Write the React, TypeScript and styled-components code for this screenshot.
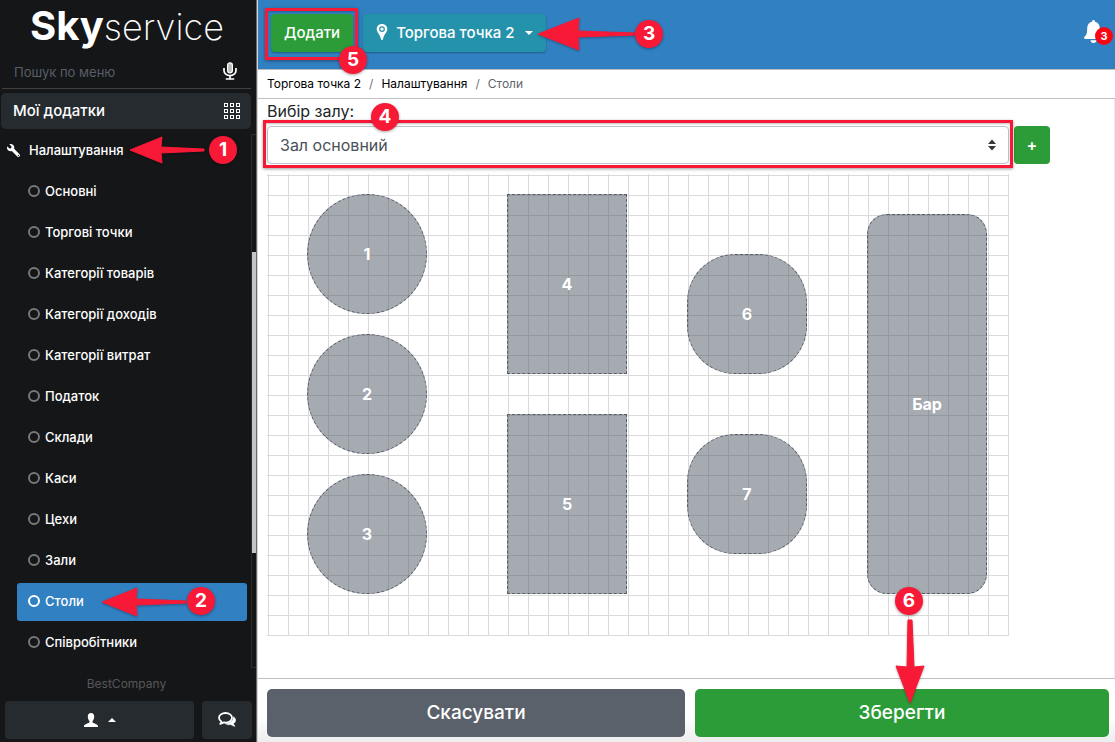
import React from "react";
import styled, { createGlobalStyle, css } from "styled-components";
import { FaWrench } from "react-icons/fa";

const RED = "#f71936";
const BLUE = "#3180c2";
const GREEN = "#2b9c37";

const GlobalStyle = createGlobalStyle`
  *, *::before, *::after { box-sizing: border-box; }
  body {
    margin: 0;
    background: #fff;
    color: #212529;
    font: 400 16px/24px Inter, "Noto Sans", sans-serif;
  }
  button, input, select { font: inherit; margin: 0; }
  button { cursor: pointer; border: 0; padding: 0; }
  ul, ol { list-style: none; margin: 0; padding: 0; }
  a { color: inherit; text-decoration: none; }
`;

const Page = styled.div`
  display: grid;
  grid-template-columns: 257px minmax(0, 1fr);
  min-height: 100vh;
`;

/* ---------- sidebar ---------- */

const Sidebar = styled.aside`
  position: relative;
  display: flex;
  flex-direction: column;
  background: #151618;
  border-right: 1px solid #6a6a6c;
  color: #fff;
`;

const Logo = styled.a`
  height: 55px;
  padding-left: 30px;
  font-size: 36px;
  line-height: 52px;
  font-weight: 200;
  white-space: nowrap;
  b {
    font-size: 40px;
    font-weight: 700;
  }
`;

const Search = styled.div`
  display: flex;
  align-items: center;
  justify-content: space-between;
  height: 34px;
  margin: 0 5px 0 2px;
  padding: 0 14px 2px 12px;
  border-bottom: 1px solid #3f4041;
`;

const SearchInput = styled.input`
  flex: 1;
  min-width: 0;
  padding: 2px 0 0;
  border: 0;
  outline: 0;
  background: transparent;
  color: #fff;
  font-size: 13px;
  line-height: 20px;
  &::placeholder { color: #575e67; opacity: 1; }
`;

const IconButton = styled.button`
  display: flex;
  background: transparent;
  color: #fff;
`;

const AppsButton = styled.button`
  display: flex;
  align-items: center;
  justify-content: space-between;
  height: 36px;
  margin: 4px 5px 5px 1px;
  padding: 0 11px 0 12px;
  border-radius: 5px;
  background: #262b2f;
  color: #fff;
  font-size: 15px;
  font-weight: 500;
`;

const MenuArea = styled.div`
  display: flex;
  flex: 1;
  min-height: 534px;
`;

const Menu = styled.nav`
  flex: 1;
  font-size: 13px;
  line-height: 20px;
  font-weight: 500;
`;

const Track = styled.div`
  width: 5px;
  height: 534px;
  padding-top: 117px;
  border: 1px solid #2c2d2f;
  border-right: 0;
`;

const Thumb = styled.div`
  height: 301px;
  background: #c4c4c6;
`;

const Section = styled.a`
  position: relative;
  display: flex;
  align-items: center;
  gap: 9px;
  height: 32px;
  margin-bottom: 7px;
  padding-left: 7px;
`;

const MenuList = styled.ul`
  display: flex;
  flex-direction: column;
  gap: 3px;
  padding: 0 4px 0 17px;
`;

const MenuLink = styled.a<{ $active?: boolean }>`
  position: relative;
  display: flex;
  align-items: center;
  gap: 5px;
  height: 38px;
  padding: 0 0 2px 11px;
  border-radius: 3px;
  background: ${(p) => (p.$active ? BLUE : "transparent")};
  &::before {
    content: "";
    width: 12px;
    height: 12px;
    border: 2px solid ${(p) => (p.$active ? "#fff" : "#77787a")};
    border-radius: 50%;
  }
`;

const Company = styled.div`
  padding: 6px 3px 7px 0;
  color: #56585a;
  font-size: 12px;
  line-height: 20px;
  text-align: center;
`;

const UserBar = styled.div`
  display: grid;
  grid-template-columns: 1fr 50px;
  gap: 8px;
  padding: 0 4px 3px 5px;
`;

const DarkButton = styled.button`
  display: flex;
  align-items: center;
  justify-content: center;
  gap: 10px;
  height: 38px;
  border-radius: 4px;
  background: #262b2f;
  color: #fff;
`;

/* ---------- main column ---------- */

const Main = styled.main`
  display: flex;
  flex-direction: column;
  min-width: 0;
  border-left: 1px solid #d5d5d6;
`;

const Header = styled.header`
  display: flex;
  align-items: flex-start;
  gap: 10px;
  height: 70px;
  padding: 14px 4px 0 13px;
  border-bottom: 1px solid #b8bcc0;
  background: ${BLUE};
`;

const Anchor = styled.div`
  position: relative;
`;

const HeaderButton = styled.button<{ $bg: string }>`
  display: flex;
  align-items: center;
  height: 38px;
  padding: 0 13px;
  border-radius: 4px;
  background: ${(p) => p.$bg};
  box-shadow: 0 1px 2px rgba(0, 0, 0, 0.3);
  color: #fff;
  font-size: 15px;
  font-weight: 500;
  white-space: nowrap;
`;

const PointLabel = styled.span`
  margin: 0 10px 0 8px;
`;

const Bell = styled(IconButton)`
  position: relative;
  margin: 6px 8px 0 auto;
`;

const BellCount = styled.span`
  position: absolute;
  left: 11px;
  top: 7px;
  width: 18px;
  height: 18px;
  border-radius: 50%;
  background: #fb0515;
  font-size: 11px;
  line-height: 18px;
  font-weight: 700;
  text-align: center;
`;

const Crumbs = styled.ol`
  display: flex;
  align-items: center;
  height: 29px;
  padding: 0 9px;
  border-bottom: 1px solid #bfbfc0;
  color: #000;
  font-size: 12px;
  line-height: 20px;
  li + li::before {
    content: "/";
    padding: 0 8px;
    color: #6c757d;
  }
  li:last-child { color: #5d656d; }
`;

const Content = styled.section`
  flex: 1;
  padding: 0 9px 42px;
  border-right: 1px solid #ececec;
`;

const Label = styled.label`
  display: block;
  height: 27px;
`;

const HallRow = styled.div`
  display: flex;
  gap: 5px;
  margin-bottom: 10px;
`;

const SelectBox = styled.div`
  position: relative;
  flex: 0 1 742px;
  color: #343a40;
  > svg:last-of-type {
    position: absolute;
    right: 13px;
    top: 13px;
    pointer-events: none;
  }
`;

const Select = styled.select`
  display: block;
  width: 100%;
  height: 38px;
  padding: 0 12px;
  appearance: none;
  border: 1px solid #bcc2c8;
  border-radius: 4px;
  background: #fff;
  color: #495057;
`;

const PlusButton = styled.button`
  width: 36px;
  height: 38px;
  border-radius: 4px;
  background: ${GREEN};
  color: #fff;
  font-weight: 600;
`;

const Canvas = styled.div`
  position: relative;
  width: 742px;
  height: 462px;
  background-image:
    linear-gradient(to right, #dadadb 1px, transparent 1px),
    linear-gradient(to bottom, #dadadb 1px, transparent 1px);
  background-size: 20px 20px;
  background-position: 1px 1px;
`;

type TableBox = { $x: number; $y: number; $w: number; $h: number; $radius: string };

const HallTable = styled.button<TableBox>`
  position: absolute;
  left: ${(p) => p.$x}px;
  top: ${(p) => p.$y}px;
  width: ${(p) => p.$w}px;
  height: ${(p) => p.$h}px;
  border: 1px dashed #585e68;
  border-radius: ${(p) => p.$radius};
  background: rgba(77, 85, 99, 0.5);
  color: #fff;
  font-weight: 700;
`;

const Footer = styled.footer`
  display: grid;
  grid-template-columns: 418fr 414fr;
  gap: 10px;
  padding: 10px 6px 5px 9px;
  border-top: 1px solid #bfbfc0;
  background: linear-gradient(#fff 60%, #ededed);
`;

const FooterButton = styled.button<{ $bg: string }>`
  position: relative;
  height: 48px;
  border-radius: 5px;
  background: ${(p) => p.$bg};
  color: #fff;
  font-size: 19px;
  font-weight: 500;
`;

/* ---------- tutorial marks ---------- */

const overlay = css<{ $x: number; $y: number }>`
  position: absolute;
  left: ${(p) => p.$x}px;
  top: ${(p) => p.$y}px;
  z-index: 2;
  pointer-events: none;
`;

const Step = styled.span<{ $x: number; $y: number }>`
  ${overlay}
  width: 28px;
  height: 28px;
  border-radius: 50%;
  background: ${RED};
  box-shadow: 0 1px 3px rgba(0, 0, 0, 0.35);
  color: #fff;
  font-size: 19px;
  line-height: 28px;
  font-weight: 700;
  text-align: center;
`;

const ArrowSvg = styled.svg<{ $x: number; $y: number }>`
  ${overlay}
  fill: ${RED};
  stroke: ${RED};
  stroke-linejoin: round;
  filter: drop-shadow(0 1px 1px rgba(0, 0, 0, 0.3));
`;

const Frame = styled.div<{ $gap: string }>`
  position: absolute;
  inset: ${(p) => p.$gap};
  z-index: 1;
  border: 3px solid ${RED};
  box-shadow: 0 1px 3px rgba(0, 0, 0, 0.4), inset 0 1px 2px rgba(0, 0, 0, 0.25);
  pointer-events: none;
`;

function LeftArrow({ x, y, head, half, length }: { x: number; y: number; head: number; half: number; length: number }) {
  const c = half + 1;
  const points = [
    [1, c], [head, 1], [head - 1, c - 3], [length - 1, c - 1],
    [length - 1, c + 1], [head - 1, c + 3], [head, c + half],
  ];
  return (
    <ArrowSvg $x={x} $y={y} width={length + 1} height={2 * half + 2} aria-hidden>
      <polygon points={points.map((p) => p.join(",")).join(" ")} />
    </ArrowSvg>
  );
}

/* ---------- icons ---------- */

const MicIcon = () => (
  <svg width="14" height="18" viewBox="0 0 14 18" fill="none" stroke="currentColor" strokeWidth="1.7">
    <rect x="4.6" y="0.8" width="4.8" height="10" rx="2.4" fill="#bbb" strokeWidth="1.2" />
    <path d="M1 6v2.5a6 5.2 0 0 0 12 0V6M7 13.7V17M2.8 17h8.4" />
  </svg>
);

const AppsIcon = () => (
  <svg width="16" height="16" viewBox="0 0 16 16" fill="none" stroke="currentColor">
    {[0, 6, 12].map((y) => [0, 6, 12].map((x) => (
      <rect key={`${x}-${y}`} x={x + 0.5} y={y + 0.5} width="3" height="3" />
    )))}
  </svg>
);

const UserIcon = () => (
  <svg width="14" height="14" viewBox="0 0 14 14" fill="currentColor">
    <path d="M7 0C4.900 0 3.800 1.400 3.800 3.300c0 1.900.6 3.800 1.700 4.800v1.200C5.400 10.200 0 10.900 0 13.200V14h14v-.8c0-2.300-5.400-3-5.500-3.900V8.100c1.100-1 1.700-2.900 1.700-4.800C10.200 1.400 9.100 0 7 0z" />
  </svg>
);

const ChatIcon = () => (
  <svg width="18" height="16" viewBox="0 0 18 16" fill="none" stroke="currentColor" strokeLinejoin="round">
    <path
      strokeWidth="1.800"
      d="M7.500 1C3.900 1 1 3.100 1 5.800c0 1.600 1 3 2.600 3.900-.3.900-.8 1.500-1.400 2.200 1.400-.2 2.700-.7 3.600-1.500.6.100 1.100.200 1.700.200 3.600 0 6.500-2.100 6.500-4.800S11.100 1 7.500 1z"
    />
    <path
      fill="currentColor"
      strokeWidth="0.600"
      d="M15.500 4.800c1.300.9 2.100 2.100 2.100 3.400 0 1.400-.8 2.600-2.200 3.500.3 1 .8 1.700 1.600 2.600-1.700-.2-3.100-.8-4.100-1.700-1.800.3-3.700 0-5.300-.8 4.500 0 7.900-2.900 7.900-7z"
    />
  </svg>
);

const PinIcon = () => (
  <svg width="12" height="18" viewBox="0 0 12 18" fill="currentColor" fillRule="evenodd">
    <path d="M6 0C2.900 0 .7 2.200.7 5c0 3.400 3.500 5.500 4.300 10.200.2 1 1.800 1 2 0C7.800 10.500 11.300 8.400 11.300 5 11.300 2.200 9.100 0 6 0zM6 2.200a2.900 2.900 0 1 1 0 5.800 2.900 2.900 0 0 1 0-5.800z" />
    <circle cx="6" cy="5.100" r="1.700" />
  </svg>
);

const BellIcon = () => (
  <svg width="19" height="23" viewBox="0 0 19 23" fill="currentColor">
    <path d="M9.500 0c.9 0 1.400.7 1.400 1.700 3.200.7 4.900 3.100 4.900 6.500 0 6.300 1.100 7.100 2.800 8.700.7.700.4 2.100-.7 2.100H1.100C0 19-.3 17.600.4 16.900 2.100 15.300 3.200 14.500 3.200 8.200c0-3.400 1.700-5.800 4.900-6.500C8.100.7 8.600 0 9.500 0zM6.500 20.300h6c0 1.500-1.200 2.700-3 2.700s-3-1.200-3-2.700z" />
  </svg>
);

const Caret = ({ up }: { up?: boolean }) => (
  <svg width="8" height="4" viewBox="0 0 8 4" fill="currentColor">
    <path d={up ? "M0 4l4-4 4 4z" : "M0 0h8L4 4z"} />
  </svg>
);

const UpDownIcon = () => (
  <svg width="8" height="12" viewBox="0 0 8 12" fill="currentColor">
    <path d="M0 5l4-4.500L8 5zM0 7h8l-4 4.500z" />
  </svg>
);

const MENU = [
  "Основні", "Торгові точки", "Категорії товарів", "Категорії доходів", "Категорії витрат", "Податок",
  "Склади", "Каси", "Цехи", "Зали", "Столи", "Співробітники",
];

const TABLES = [
  { name: "1", x: 40, y: 20, w: 120, h: 120, radius: "50%" },
  { name: "2", x: 40, y: 160, w: 120, h: 120, radius: "50%" },
  { name: "3", x: 40, y: 300, w: 120, h: 120, radius: "50%" },
  { name: "4", x: 240, y: 20, w: 120, h: 180, radius: "0" },
  { name: "5", x: 240, y: 240, w: 120, h: 180, radius: "0" },
  { name: "6", x: 420, y: 80, w: 120, h: 120, radius: "48px" },
  { name: "7", x: 420, y: 260, w: 120, h: 120, radius: "48px" },
  { name: "Бар", x: 600, y: 40, w: 120, h: 380, radius: "20px" },
];

export default function App() {
  return (
    <>
      <GlobalStyle />
      <Page>
        <Sidebar>
          <Logo href="#"><b>Sky</b>service</Logo>
          <Search>
            <SearchInput type="text" placeholder="Пошук по меню" aria-label="Пошук по меню" />
            <IconButton type="button" aria-label="Голосовий пошук"><MicIcon /></IconButton>
          </Search>
          <AppsButton type="button">Мої додатки<AppsIcon /></AppsButton>
          <MenuArea>
            <Menu>
              <Section href="#">
                <FaWrench size={13} transform="scale(-1 1)" />
                Налаштування
                <LeftArrow x={129} y={2} head={33} half={13} length={76} />
                <Step $x={209} $y={2}>1</Step>
              </Section>
              <MenuList>
                {MENU.map((name) => (
                  <li key={name}>
                    <MenuLink href="#" $active={name === "Столи"}>
                      {name}
                      {name === "Столи" && (
                        <>
                          <LeftArrow x={84} y={4} head={36} half={14} length={86} />
                          <Step $x={170} $y={4}>2</Step>
                        </>
                      )}
                    </MenuLink>
                  </li>
                ))}
              </MenuList>
            </Menu>
            <Track><Thumb /></Track>
          </MenuArea>
          <Company>BestCompany</Company>
          <UserBar>
            <DarkButton type="button" aria-label="Користувач"><UserIcon /><Caret up /></DarkButton>
            <DarkButton type="button" aria-label="Чат"><ChatIcon /></DarkButton>
          </UserBar>
        </Sidebar>

        <Main>
          <Header>
            <Anchor>
              <HeaderButton type="button" $bg={GREEN}>Додати</HeaderButton>
              <Frame $gap="-6px -5px -8px -6px" />
              <Step $x={68} $y={32}>5</Step>
            </Anchor>
            <Anchor>
              <HeaderButton type="button" $bg="#2492aa">
                <PinIcon />
                <PointLabel>Торгова точка 2</PointLabel>
                <Caret />
              </HeaderButton>
              <LeftArrow x={174} y={3} head={42} half={16} length={99} />
              <Step $x={272} $y={6}>3</Step>
            </Anchor>
            <Bell type="button" aria-label="Сповіщення">
              <BellIcon />
              <BellCount>3</BellCount>
            </Bell>
          </Header>
          <Crumbs>
            <li><a href="#">Торгова точка 2</a></li>
            <li><a href="#">Налаштування</a></li>
            <li>Столи</li>
          </Crumbs>
          <Content>
            <Label htmlFor="hall">Вибір залу:</Label>
            <HallRow>
              <SelectBox>
                <Select id="hall"><option>Зал основний</option></Select>
                <UpDownIcon />
                <Frame $gap="-6px -4px -4px" />
                <Step $x={104} $y={-23}>4</Step>
              </SelectBox>
              <PlusButton type="button" aria-label="Додати зал">+</PlusButton>
            </HallRow>
            <Canvas>
              {TABLES.map((t) => (
                <HallTable key={t.name} type="button" $x={t.x} $y={t.y} $w={t.w} $h={t.h} $radius={t.radius}>
                  {t.name}
                </HallTable>
              ))}
            </Canvas>
          </Content>
          <Footer>
            <FooterButton type="button" $bg="#5a616a">Скасувати</FooterButton>
            <FooterButton type="button" $bg={GREEN}>
              Зберегти
              <Step $x={200} $y={-102}>6</Step>
              <ArrowSvg $x={200} $y={-71} width="31" height="87" aria-hidden>
                <polygon points="13,2 17,2 19,49 29,48 15,85 1,48 12,49" />
              </ArrowSvg>
            </FooterButton>
          </Footer>
        </Main>
      </Page>
    </>
  );
}
